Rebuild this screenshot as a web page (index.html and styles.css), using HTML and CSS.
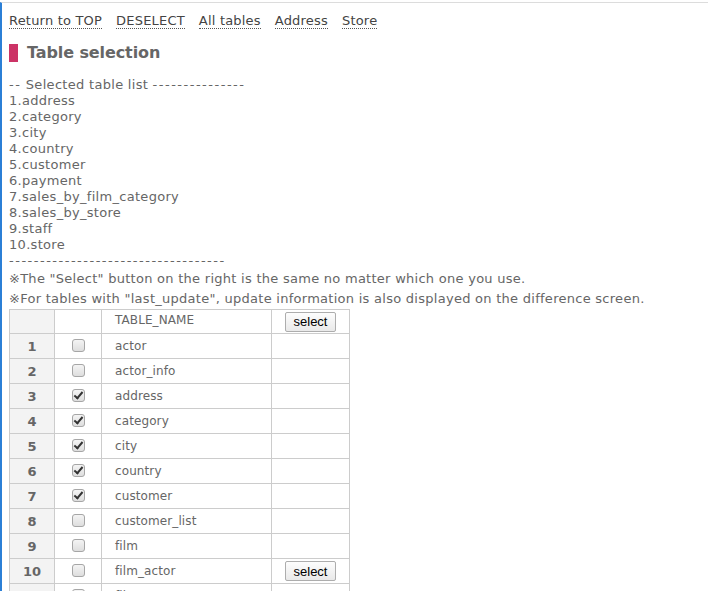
FILE: index.html
```html
<!DOCTYPE html>
<html>
<head>
<meta charset="utf-8">
<link rel="stylesheet" href="styles.css">
</head>
<body>
<div class="frame">
  <nav class="nav">
    <a href="#">Return to TOP</a>
    <a href="#">DESELECT</a>
    <a href="#">All tables</a>
    <a href="#">Address</a>
    <a href="#">Store</a>
  </nav>
  <h2 class="title">Table selection</h2>
  <div class="list">
    <div><span class="dash">--</span> Selected table list <span class="dash">---------------</span></div>
    <div>1.address</div>
    <div>2.category</div>
    <div>3.city</div>
    <div>4.country</div>
    <div>5.customer</div>
    <div>6.payment</div>
    <div>7.sales_by_film_category</div>
    <div>8.sales_by_store</div>
    <div>9.staff</div>
    <div>10.store</div>
    <div><span class="dash">-----------------------------------</span></div>
  </div>
  <p class="note">※The "Select" button on the right is the same no matter which one you use.</p>
  <p class="note">※For tables with "last_update", update information is also displayed on the difference screen.</p>
  <table class="tbl">
    <tr class="head">
      <td class="num"></td>
      <td class="chk"></td>
      <td class="name hname">TABLE_NAME</td>
      <td class="act"><button class="btn">select</button></td>
    </tr>
    <tr><td class="num">1</td><td class="chk"><input type="checkbox"></td><td class="name">actor</td><td class="act"></td></tr>
    <tr><td class="num">2</td><td class="chk"><input type="checkbox"></td><td class="name">actor_info</td><td class="act"></td></tr>
    <tr><td class="num">3</td><td class="chk"><input type="checkbox" checked></td><td class="name">address</td><td class="act"></td></tr>
    <tr><td class="num">4</td><td class="chk"><input type="checkbox" checked></td><td class="name">category</td><td class="act"></td></tr>
    <tr><td class="num">5</td><td class="chk"><input type="checkbox" checked></td><td class="name">city</td><td class="act"></td></tr>
    <tr><td class="num">6</td><td class="chk"><input type="checkbox" checked></td><td class="name">country</td><td class="act"></td></tr>
    <tr><td class="num">7</td><td class="chk"><input type="checkbox" checked></td><td class="name">customer</td><td class="act"></td></tr>
    <tr><td class="num">8</td><td class="chk"><input type="checkbox"></td><td class="name">customer_list</td><td class="act"></td></tr>
    <tr><td class="num">9</td><td class="chk"><input type="checkbox"></td><td class="name">film</td><td class="act"></td></tr>
    <tr><td class="num">10</td><td class="chk"><input type="checkbox"></td><td class="name">film_actor</td><td class="act"><button class="btn">select</button></td></tr>
    <tr><td class="num">11</td><td class="chk"><input type="checkbox"></td><td class="name">film_category</td><td class="act"></td></tr>
  </table>
</div>
</body>
</html>
```

FILE: styles.css
```css
html, body {
  margin: 0;
  padding: 0;
  background: #fff;
}
body {
  font-family: "DejaVu Sans", Verdana, sans-serif;
  font-size: 13px;
  color: #666;
  overflow: hidden;
}
.frame {
  border-left: 2px solid #2b7fd6;
  margin-top: 2px;
  border-top: 1px solid #dcdcdc;
  padding: 10px 0 0 7px;
  min-height: 600px;
}
.nav {
  display: flex;
  gap: 14px;
  line-height: 16px;
}
.nav a {
  color: #444;
  text-decoration: none;
  border-bottom: 1px dotted #555;
  line-height: 15px;
  letter-spacing: 0.2px;
}
.title {
  margin: 14px 0 14px 0;
  font-size: 16px;
  line-height: 20px;
  font-weight: bold;
  color: #666;
  display: flex;
  align-items: center;
  gap: 9px;
  letter-spacing: -0.1px;
}
.title::before {
  content: "";
  width: 9px;
  height: 18px;
  background: #cc3366;
}
.list {
  line-height: 16px;
  letter-spacing: 0.3px;
}
.dash {
  letter-spacing: 1.5px;
}
.note {
  margin: 0;
  line-height: 20px;
  letter-spacing: 0.27px;
}
.tbl {
  border-collapse: collapse;
}
.tbl td {
  border: 1px solid #cccccc;
  height: 25px;
  padding: 0;
  box-sizing: border-box;
  vertical-align: middle;
}
.tbl .head td {
  height: 24px;
}
.tbl td.num {
  width: 45px;
  background: #f3f3f3;
  text-align: center;
  font-weight: bold;
  color: #666;
}
.tbl td.chk {
  width: 47px;
  text-align: center;
}
.tbl td.chk input {
  appearance: none;
  -webkit-appearance: none;
  margin: 0 0 2px 0;
  width: 13px;
  height: 13px;
  vertical-align: middle;
  border: 1px solid #a6a6a6;
  border-radius: 3px;
  background: linear-gradient(#f4f4f4, #dedede);
  position: relative;
  box-sizing: border-box;
}
.tbl td.chk input:checked::after {
  content: "";
  position: absolute;
  left: 3px;
  top: 0px;
  width: 3px;
  height: 7px;
  border-right: 2px solid #333;
  border-bottom: 2px solid #333;
  transform: rotate(40deg);
}
.tbl td.name {
  width: 170px;
  padding-left: 13px;
  font-size: 12px;
  color: #666;
  letter-spacing: 0.1px;
}
.tbl td.hname {
  vertical-align: top;
  padding-top: 3px;
}
.tbl td.act {
  width: 78px;
  text-align: center;
}
.btn {
  font-family: "Liberation Sans", Arial, sans-serif;
  font-size: 13px;
  color: #000;
  width: 51px;
  height: 20px;
  padding: 0;
  border: 1px solid #adadad;
  border-radius: 2px;
  background: linear-gradient(#fdfdfd, #e9e9e9);
  vertical-align: middle;
}
```
